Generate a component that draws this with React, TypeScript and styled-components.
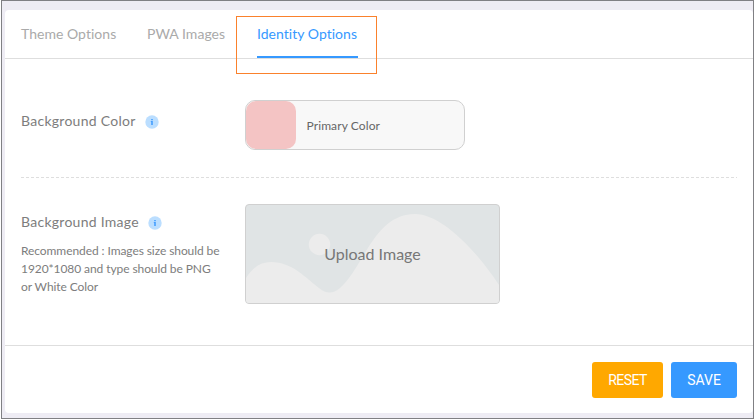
import React from "react";
import styled, { createGlobalStyle } from "styled-components";

const GlobalStyle = createGlobalStyle`
  *, *::before, *::after { box-sizing: border-box; }
  body { margin: 0; background: #fff; font-family: Lato, sans-serif; font-variant-ligatures: none; color: #7d7d7d; }
  #root { overflow: hidden; height: 420px; }
  button { font: inherit; font-variant-ligatures: none; border: 0; padding: 0; cursor: pointer; }
`;

const Frame = styled.div`
  width: 753px;
  height: 419px;
  margin-left: 1px;
  border: 1px solid #808084;
  background: #eeecf4;
  padding: 9px 0 5px 3px;
`;

const Card = styled.main`
  height: 403px;
  background: #fff;
  border-radius: 4px;
  display: flex;
  flex-direction: column;
`;

const Tabs = styled.nav`
  position: relative;
  height: 49px;
  flex: none;
  display: flex;
  gap: 32px;
  padding-left: 16px;
  border-bottom: 1px solid #dedede;
`;

const Tab = styled.button<{ $active?: boolean; $width: number }>`
  width: ${(p) => p.$width}px;
  height: 48px;
  background: none;
  font-size: 14px;
  line-height: 20px;
  letter-spacing: 0.03px;
  padding: 2px 0 0;
  border-bottom: 2px solid ${(p) => (p.$active ? "#3699ff" : "transparent")};
  color: ${(p) => (p.$active ? "#3699ff" : "#aaa")};
  text-align: left;
  white-space: nowrap;
`;

const Highlight = styled.span`
  position: absolute;
  left: 231px;
  top: 6px;
  width: 141px;
  height: 58px;
  border: 1px solid #fa812c;
  pointer-events: none;
`;

const Options = styled.section`
  flex: 1;
  padding: 0 16px;
`;

const OptionRow = styled.div<{ $height: number; $top: number; $divided?: boolean }>`
  display: grid;
  grid-template-columns: 224px 1fr;
  align-items: start;
  height: ${(p) => p.$height}px;
  padding-top: ${(p) => p.$top}px;
  ${(p) =>
    p.$divided &&
    `background: repeating-linear-gradient(90deg, #dedede 0 3px, transparent 3px 5px) left bottom / 100% 1px no-repeat;`}
`;

const LabelBlock = styled.div<{ $offset: number }>`
  padding-top: ${(p) => p.$offset}px;
`;

const Label = styled.div`
  display: flex;
  align-items: center;
  gap: 9px;
  font-size: 14px;
  line-height: 20px;
  letter-spacing: 0.27px;
  white-space: nowrap;
`;

const LabelText = styled.span<{ $width: number }>`
  width: ${(p) => p.$width}px;
`;

const InfoSvg = styled.svg`
  display: block;
  margin-top: 2px;
`;

const Hint = styled.p`
  margin: 10px 0 0;
  width: 201px;
  font-size: 12px;
  line-height: 18px;
  letter-spacing: -0.08px;
`;

const ColorField = styled.div`
  width: 220px;
  height: 50px;
  display: flex;
  align-items: center;
  gap: 10.5px;
  border: 1px solid #d0d0d0;
  border-radius: 10px;
  background: #f8f8f8;
  font-size: 12px;
  letter-spacing: 0.1px;
  color: #666;
`;

const Swatch = styled.span`
  width: 50px;
  height: 48px;
  border-radius: 10px;
  background: #f4c4c4;
`;

const UploadBox = styled.button`
  display: grid;
  place-items: center;
  width: 255px;
  height: 100px;
  overflow: hidden;
  border: 1px solid #d0d0d0;
  border-radius: 4px;
  background: #e0e4e5;
  color: #777;
  font-size: 16px;
  > * { grid-area: 1 / 1; }
`;

const UploadLabel = styled.span`
  padding-bottom: 2px;
`;

const Actions = styled.footer`
  height: 68px;
  flex: none;
  display: flex;
  justify-content: flex-end;
  gap: 8px;
  padding: 16px 16px 0 0;
  border-top: 1px solid #dedede;
`;

const ActionButton = styled.button<{ $tone: string; $width: number; $tracking: number }>`
  width: ${(p) => p.$width}px;
  height: 36px;
  border-radius: 3px;
  background: ${(p) => p.$tone};
  color: #fff;
  font: 400 14px/37px Roboto, sans-serif;
  letter-spacing: ${(p) => p.$tracking}px;
`;

const InfoIcon = () => (
  <InfoSvg width="14" height="14" viewBox="0 0 14 14" aria-hidden="true">
    <circle cx="7" cy="7" r="6.7" fill="#bbdeff" />
    <path d="M6.2 4h1.6v1.2H6.2zM5.8 6h2v4H6.2V7h-.4z" fill="#459fff" />
  </InfoSvg>
);

const Landscape = () => (
  <svg width="253" height="98" viewBox="0 0 253 98" aria-hidden="true">
    <circle cx="73.5" cy="39.5" r="10.7" fill="#ececec" />
    <path
      d="M0 73C7 62 15 57 25 57C46 57 60 73 73 83C80 89 87 89 94 83C118 62 128 9 169 9C194 9 228 42 253 80V98H0Z"
      fill="#ececec"
    />
  </svg>
);

export default function App() {
  return (
    <>
      <GlobalStyle />
      <Frame>
        <Card>
          <Tabs>
            <Tab $width={94}>Theme Options</Tab>
            <Tab $width={78}>PWA Images</Tab>
            <Tab $width={101} $active>Identity Options</Tab>
            <Highlight />
          </Tabs>
          <Options>
            <OptionRow $height={119} $top={41} $divided>
              <LabelBlock $offset={11}>
                <Label><LabelText $width={115}>Background Color</LabelText><InfoIcon /></Label>
              </LabelBlock>
              <ColorField><Swatch />Primary Color</ColorField>
            </OptionRow>
            <OptionRow $height={167} $top={26}>
              <LabelBlock $offset={8}>
                <Label><LabelText $width={118}>Background Image</LabelText><InfoIcon /></Label>
                <Hint>Recommended : Images size should be 1920*1080 and type should be PNG or White Color</Hint>
              </LabelBlock>
              <UploadBox><Landscape /><UploadLabel>Upload Image</UploadLabel></UploadBox>
            </OptionRow>
          </Options>
          <Actions>
            <ActionButton $tone="#ffa800" $width={71} $tracking={-0.6}>RESET</ActionButton>
            <ActionButton $tone="#3699ff" $width={66} $tracking={0}>SAVE</ActionButton>
          </Actions>
        </Card>
      </Frame>
    </>
  );
}
